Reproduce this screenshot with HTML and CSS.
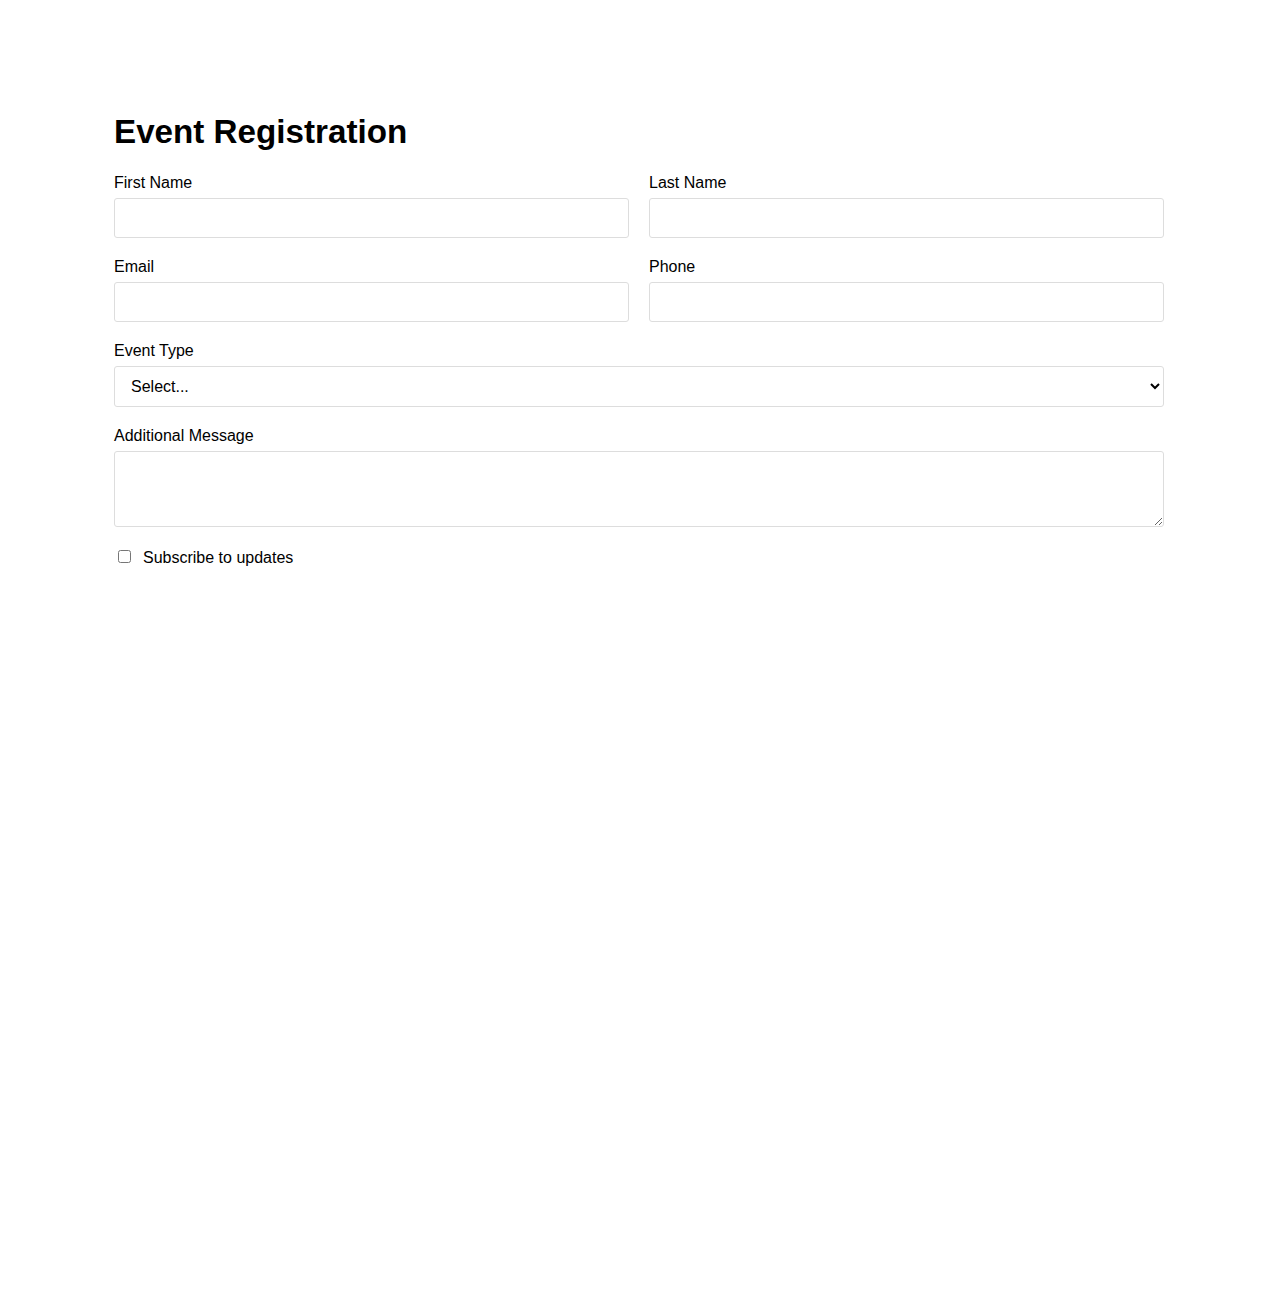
FILE: index.html
```html
<!DOCTYPE html>
<html lang="en">
  <head>
    <meta charset="UTF-8" />
    <meta name="viewport" content="width=device-width, initial-scale=1.0" />
    <title>Event Registration</title>
    <link rel="stylesheet" href="styles.css">
  </head>
  <body>
    <div class="container">
      <h1>Event Registration</h1>
      <form id="registerForm">
        <div class="row">
          <div class="field">
            <label for="firstName">First Name</label>
            <input type="text" id="firstName" name="firstName" />
          </div>
          <div class="field">
            <label for="lastName">Last Name</label>
            <input type="text" id="lastName" name="lastName" />
          </div>
        </div>

        <div class="row">
          <div class="field">
            <label for="email">Email</label>
            <input type="email" id="email" name="email" />
          </div>
          <div class="field">
            <label for="phone">Phone</label>
            <input type="tel" id="phone" name="phone" />
          </div>
        </div>

        <div class="field">
          <label for="eventType">Event Type</label>
          <select id="eventType" name="eventType">
            <option value="">Select...</option>
            <option value="conference">Conference</option>
            <option value="workshop">Workshop</option>
            <option value="meetup">Meetup</option>
          </select>
        </div>

        <div class="field">
          <label for="message">Additional Message</label>
          <textarea id="message" name="message"></textarea>
        </div>

        <label class="checkbox">
          <input type="checkbox" name="subscribe" />
          <span>Subscribe to updates</span>
        </label>
      </form>
    </div>
  </body>
</html>
```

FILE: styles.css
```css
body {
  font-family: "Liberation Sans", Arial, sans-serif;
  margin: 0;
  color: #000;
  background: #fff;
}
.container {
  max-width: 1050px;
  margin: 0 auto;
  padding-top: 92px;
}
h1 {
  font-size: 33.2px;
  margin: 21px 0 23px;
}
.row {
  display: grid;
  grid-template-columns: 1fr 1fr;
  gap: 20px;
}
.field {
  display: flex;
  flex-direction: column;
  gap: 6px;
  margin-bottom: 20px;
}
label {
  font-size: 16px;
}
input,
select,
textarea {
  box-sizing: border-box;
  width: 100%;
  font-family: inherit;
  font-size: 16px;
  border: 1px solid #ddd;
  border-radius: 3px;
  background: #fff;
  margin: 0;
}
input {
  height: 40px;
  padding: 0 10px;
}
select {
  height: 41px;
  padding: 0 12px;
  color: #000;
}
textarea {
  height: 76px;
  padding: 10px;
  display: block;
}
/* margin collapses with the field above, so this is the full gap */
.checkbox {
  display: flex;
  align-items: flex-start;
  gap: 12px;
  margin-top: 22px;
}
.checkbox input {
  width: 13px;
  height: 13px;
  margin: 1px 0 0 4px;
}
```
